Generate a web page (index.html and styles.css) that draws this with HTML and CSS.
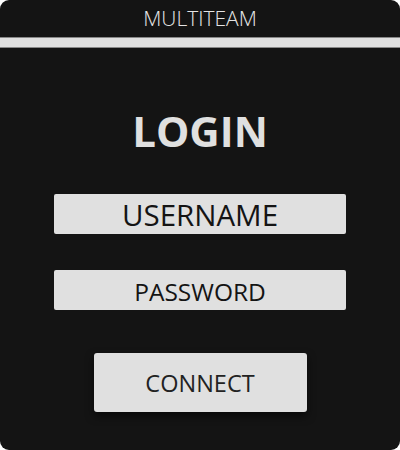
FILE: index.html
```html
<!DOCTYPE html>
<html lang="en">
<head>
    <meta charset="UTF-8">
    <meta name="viewport" content="width=device-width, initial-scale=1.0">
    <title>Multiteam</title>
    <link rel="stylesheet" href="styles.css">
</head>
<body>
    <div class="panel">
        <div class="title">MULTITEAM</div>
        <div class="bar"></div>

        <h1>LOGIN</h1>

        <div class="field field-user">USERNAME</div>
        <div class="field field-pass">PASSWORD</div>

        <button class="connect">CONNECT</button>
    </div>
</body>
</html>
```

FILE: styles.css
```css
html, body {
    margin: 0;
    padding: 0;
    background-color: #ffffff;
}
body {
    font-family: "Open Sans", "Noto Sans", sans-serif;
}
.panel {
    width: 400px;
    height: 450px;
    background-color: #141414;
    border-radius: 9px;
    overflow: hidden;
    display: flex;
    flex-direction: column;
    align-items: center;
}
.title {
    height: 37px;
    line-height: 37px;
    font-size: 21px;
    font-weight: 300;
    color: #e4e4e4;
}
.bar {
    align-self: stretch;
    height: 9px;
    background-color: #e0e0e0;
    border-top: 1px solid #888888;
    border-bottom: 1px solid #888888;
}
h1 {
    margin: 58px 0 0 0;
    height: 50px;
    line-height: 50px;
    font-size: 42px;
    font-weight: 700;
    color: #e0e0e0;
}
.field {
    width: 292px;
    height: 40px;
    background-color: #e0e0e0;
    border-radius: 2px;
    color: #141414;
    font-weight: 500;
    text-align: center;
}
.field-user {
    margin-top: 38px;
    font-size: 29.5px;
    line-height: 41px;
}
.field-pass {
    margin-top: 36px;
    font-size: 24.5px;
    line-height: 44px;
}
.connect {
    margin-top: 43px;
    width: 213px;
    height: 59px;
    border: none;
    border-radius: 3px;
    background-color: #e0e0e0;
    color: #222222;
    font-family: inherit;
    font-weight: 500;
    font-size: 23.5px;
    box-shadow: 0 4px 8px rgba(0, 0, 0, 0.6);
    cursor: pointer;
}
```
